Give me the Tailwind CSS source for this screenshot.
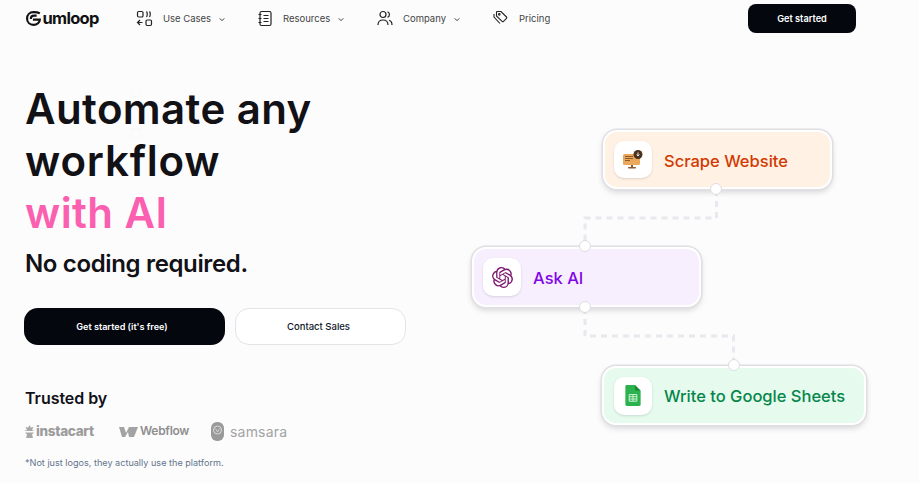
<!DOCTYPE html>
<html lang="en">
  <head>
    <meta charset="UTF-8" />
    <meta name="viewport" content="width=device-width, initial-scale=1.0" />
    <title>Gumloop</title>
    <script src="https://cdn.jsdelivr.net/npm/@tailwindcss/browser@4"></script>
  </head>
  <body class="bg-[#fcfcfd] font-['Inter',sans-serif] text-[#0f0f14] overflow-hidden">
    <div class="relative w-[919px] h-[483px] overflow-hidden">
      <!-- nav -->
      <header class="flex items-center h-[37px] pl-[26px]">
        <a class="flex items-center w-[110px] text-[16.5px] font-bold tracking-[-0.7px] text-[#111]">
          <svg class="w-[16px] h-[15px] mr-[0.5px]" viewBox="0 0 15 14" fill="none" stroke="#111" stroke-width="2"><path d="M13 2.200C11 1 9 1 7 1 3.500 1 1 3.500 1 7s2.500 6 6 6 6-2.500 6-5H6.500" /><path d="M4.500 7.500c0-2 1-3.200 3-3.200h2.500" /></svg>
          <span>umloop</span>
        </a>
        <nav class="flex items-center text-[#444] pt-[1px]">
          <a class="flex items-center w-[121px]">
            <svg class="w-[17px] h-[17px] mr-[10px] -mt-[2px]" viewBox="0 0 17 17" fill="none" stroke="#222" stroke-width="1.2"><rect x="1.500" y="1.500" width="5.500" height="5.500" rx="1.200" /><rect x="10" y="10" width="5.500" height="5.500" rx="1.200" /><path d="M10.500 1.500c1 1.200 1 4 0 5.500M13.500 1.500c1 1.200 1 4 0 5.500M1.500 12.500h5M4 10l-2.500 2.500L4 15" /></svg>
            <span class="text-[9.5px]">Use Cases</span>
            <svg class="w-[6px] h-[5px] ml-[8px]" viewBox="0 0 8 6" fill="none" stroke="#333" stroke-width="1.3"><path d="M1 1.500l3 3 3-3" /></svg>
          </a>
          <a class="flex items-center w-[120px]">
            <svg class="w-[17px] h-[17px] mr-[9px] -mt-[2px]" viewBox="0 0 17 17" fill="none" stroke="#222" stroke-width="1.2"><rect x="3" y="1.500" width="11" height="14" rx="1.500" /><path d="M6.500 5.500h5M6.500 8.500h5M6.500 11.500h5M1.500 4.500h3M1.500 8.500h3M1.500 12.500h3" /></svg>
            <span class="text-[9.5px]">Resources</span>
            <svg class="w-[6px] h-[5px] ml-[8px]" viewBox="0 0 8 6" fill="none" stroke="#333" stroke-width="1.3"><path d="M1 1.500l3 3 3-3" /></svg>
          </a>
          <a class="flex items-center w-[115px]">
            <svg class="w-[16px] h-[16px] mr-[10px] -mt-[3px]" viewBox="0 0 16 16" fill="none" stroke="#222" stroke-width="1.2"><circle cx="6" cy="4.500" r="3" /><path d="M1 15c0-3.500 2-5 5-5s5 1.500 5 5M10.500 1.700a3 3 0 0 1 0 5.600M12 10.300c2 .6 3 2 3 4.700" /></svg>
            <span class="text-[9.5px]">Company</span>
            <svg class="w-[6px] h-[5px] ml-[8px]" viewBox="0 0 8 6" fill="none" stroke="#333" stroke-width="1.3"><path d="M1 1.500l3 3 3-3" /></svg>
          </a>
          <a class="flex items-center">
            <svg class="w-[16px] h-[16px] mr-[11px] -mt-[3px]" viewBox="0 0 16 16" fill="none" stroke="#222" stroke-width="1.1"><path d="M5 1.500h4l5.500 5.500a1 1 0 0 1 0 1.400l-3 3a1 1 0 0 1-1.400 0L4.500 6V2z" /><circle cx="7.300" cy="4.300" r=".8" /><path d="M2 4v3l6 6.500" /></svg>
            <span class="text-[9.5px]">Pricing</span>
          </a>
        </nav>
        <button class="ml-auto mr-[63px] w-[108px] h-[29px] rounded-[8px] bg-[#05070f] text-white text-[9.2px] font-semibold">Get started</button>
      </header>

      <!-- faint dropdown fading out behind the headline -->
      <div class="absolute left-[131px] top-[62px] flex flex-col text-[8px] leading-[12px] text-black/[0.03]">
        <span class="flex items-center gap-[5px] h-[20px]"><i class="w-[10px] h-[10px] rounded-full border border-black/[0.015]"></i>AI Web Scraping</span>
        <span class="flex items-center gap-[5px] h-[20px]"><i class="w-[10px] h-[10px] rounded-[3px] border border-black/[0.015]"></i>Social Media</span>
        <span class="flex items-center gap-[5px] h-[20px] mt-[21px]"><i class="w-[10px] h-[10px] border border-black/[0.015]"></i>Document Processing</span>
      </div>

      <!-- hero copy -->
      <main class="relative pl-[25px] pt-[46px]">
        <h1 class="text-[42px] leading-[52px] font-semibold tracking-[0.4px] text-[#111116]">
          Automate any<br /><span class="tracking-[0.8px]">workflow</span><br /><span class="text-[#fb5fb0]">with AI</span>
        </h1>
        <p class="mt-[9px] text-[24px] leading-[32px] font-semibold tracking-[-0.35px] text-[#111116]">No coding required.</p>
        <div class="mt-[28px] -ml-[1px] flex gap-[10px]">
          <button class="w-[201px] h-[37px] pr-[5px] rounded-[14px] bg-[#05070f] text-white text-[9.1px] font-semibold">Get started (it's free)</button>
          <button class="w-[171px] h-[37px] pr-[4px] pt-[1px] rounded-[14px] border border-[#e3e4e8] bg-white text-[#0f172a] text-[9.5px] font-medium">Contact Sales</button>
        </div>
        <p class="mt-[41px] text-[16px] leading-[24px] font-semibold tracking-[-0.05px] text-[#111116]">Trusted by</p>
        <div class="mt-[9px] -ml-[1px] flex items-center h-[24px] text-[#9c9c9c]">
          <span class="flex items-center w-[95px] text-[13.5px] font-extrabold tracking-[-0.3px]">
            <svg class="w-[11px] h-[13px] mr-[1px]" viewBox="0 0 11 13" fill="#a8a8a8"><path d="M5.500 0l1.300 2.500L9.500 2 8 5l3 1H0l3-1-1.500-3 2.700.5zM1 7.500h9L8 9.500 9 13H2l1-3.500z" /></svg>
            instacart
          </span>
          <span class="flex items-center w-[92px] text-[12px] font-semibold tracking-[-0.3px] text-[#8f8f8f]">
            <svg class="w-[19px] h-[11px] mr-[2px]" viewBox="0 0 19 11" fill="#a3a3a3"><path d="M0 1h5l2 6 3-6h9l-4 10h-5l-1-5-3 5H3z" /></svg>
            Webflow
          </span>
          <span class="flex items-center text-[14px] tracking-[0.2px] text-[#a3a3a3]">
            <svg class="w-[13px] h-[19px] mr-[6px]" viewBox="0 0 13 19"><rect width="13" height="19" rx="6" fill="#9a9a9a" /><circle cx="6.500" cy="8" r="4" fill="none" stroke="#ddd" /><path d="M4.500 6.500l2 3.500 2-3.500" fill="none" stroke="#ddd" stroke-width=".8" /></svg>
            samsara
          </span>
        </div>
        <p class="mt-[14px] text-[9.1px] leading-[12px] text-[#64748b]">*Not just logos, they actually use the platform.</p>
      </main>

      <!-- workflow diagram -->
      <svg class="absolute left-0 top-0 w-[919px] h-[483px]" viewBox="0 0 919 483" fill="none">
        <path d="M716.500 190V218H585V247M585 308V336H733.500V365" stroke="#e8e8ee" stroke-width="3" stroke-dasharray="6 5" />
      </svg>

      <div class="absolute left-[603px] top-[130px] w-[229px] h-[59px] rounded-[14px] bg-[#fff1e4] border-2 border-white flex items-center pl-[9px] gap-[12px] shadow-[0_0_0_1.5px_#dfdfe4,0_3px_6px_rgba(0,0,0,0.16)]">
        <span class="w-[38px] h-[37px] rounded-[10px] bg-white flex items-center justify-center shadow-sm">
          <svg class="w-[21px] h-[20px]" viewBox="0 0 21 20"><rect x="0" y="4" width="17" height="11" rx="1.500" fill="#eba75a" /><path d="M2 6.500h8M2 8.500h8M2 10.500h5" stroke="#8a5a2b" stroke-width="1" /><rect x="8" y="15" width="2" height="2" fill="#8a5a2b" /><rect x="5" y="17" width="8" height="1.500" rx=".7" fill="#8a5a2b" /><circle cx="15" cy="4.500" r="4.500" fill="#4a3320" /><path d="M15 2.500v3M13.700 4.500l1.300 1.500 1.300-1.500" stroke="#fff" stroke-width=".9" fill="none" /></svg>
        </span>
        <span class="text-[16.5px] font-[450] pt-[3px] text-[#d13a00]">Scrape Website</span>
      </div>

      <div class="absolute left-[472px] top-[247px] w-[229px] h-[60px] rounded-[14px] bg-[#f7effe] border-2 border-white flex items-center pl-[9px] gap-[12px] shadow-[0_0_0_1.5px_#dfdfe4,0_3px_6px_rgba(0,0,0,0.16)]">
        <span class="w-[38px] h-[38px] rounded-[10px] bg-white flex items-center justify-center shadow-sm">
          <svg class="w-[21px] h-[21px]" viewBox="0 0 24 24" fill="#7d1a6e"><path d="M22.282 9.821a5.985 5.985 0 0 0-.516-4.91 6.046 6.046 0 0 0-6.51-2.9A6.065 6.065 0 0 0 4.981 4.18a5.985 5.985 0 0 0-3.998 2.9 6.046 6.046 0 0 0 .743 7.097 5.98 5.98 0 0 0 .51 4.911 6.051 6.051 0 0 0 6.515 2.9A5.985 5.985 0 0 0 13.26 24a6.056 6.056 0 0 0 5.772-4.206 5.99 5.99 0 0 0 3.997-2.9 6.056 6.056 0 0 0-.747-7.073zM13.26 22.43a4.476 4.476 0 0 1-2.876-1.04l.141-.081 4.779-2.758a.795.795 0 0 0 .392-.681v-6.737l2.02 1.168a.071.071 0 0 1 .038.052v5.583a4.504 4.504 0 0 1-4.494 4.494zM3.6 18.304a4.47 4.47 0 0 1-.535-3.014l.142.085 4.783 2.759a.771.771 0 0 0 .78 0l5.843-3.369v2.332a.08.08 0 0 1-.033.062L9.74 19.95a4.5 4.5 0 0 1-6.14-1.646zM2.34 7.896a4.485 4.485 0 0 1 2.366-1.973V11.6a.766.766 0 0 0 .388.676l5.815 3.355-2.02 1.168a.076.076 0 0 1-.071 0l-4.83-2.786A4.504 4.504 0 0 1 2.34 7.872zm16.597 3.855-5.833-3.387L15.119 7.2a.076.076 0 0 1 .071 0l4.83 2.791a4.494 4.494 0 0 1-.676 8.105v-5.678a.79.79 0 0 0-.407-.667zm2.01-3.023-.141-.085-4.774-2.782a.776.776 0 0 0-.785 0L9.409 9.23V6.897a.066.066 0 0 1 .028-.061l4.83-2.787a4.5 4.5 0 0 1 6.68 4.66zm-12.64 4.135-2.02-1.164a.08.08 0 0 1-.038-.057V6.075a4.5 4.5 0 0 1 7.375-3.453l-.142.08-4.778 2.758a.795.795 0 0 0-.393.681zm1.097-2.365 2.602-1.5 2.607 1.5v2.999l-2.597 1.5-2.607-1.5z" /></svg>
        </span>
        <span class="text-[16.5px] font-[450] pt-[2px] text-[#8207e6]">Ask AI</span>
      </div>

      <div class="absolute left-[602px] top-[366px] w-[264px] h-[59px] rounded-[14px] bg-[#e6faee] border-2 border-white flex items-center pl-[10px] gap-[12px] shadow-[0_0_0_1.5px_#dfdfe4,0_3px_6px_rgba(0,0,0,0.16)]">
        <span class="w-[38px] h-[38px] rounded-[10px] bg-white flex items-center justify-center shadow-sm">
          <svg class="w-[16px] h-[21px]" viewBox="0 0 16 22"><path d="M1.500 0H10l6 6v14.500a1.500 1.500 0 0 1-1.500 1.500h-13A1.500 1.500 0 0 1 0 20.500v-19A1.500 1.500 0 0 1 1.500 0z" fill="#2bb24c" /><path d="M10 0l6 6h-4.500A1.500 1.500 0 0 1 10 4.500z" fill="#1b8a38" /><path d="M4 10h8v7H4zM4 12.300h8M4 14.700h8M8 10v7" stroke="#d6f3dd" stroke-width="1" fill="none" /></svg>
        </span>
        <span class="text-[16.5px] font-[450] pt-[2px] text-[#04864a]">Write to Google Sheets</span>
      </div>

      <!-- connector handles -->
      <span class="absolute left-[710px] top-[183px] w-[12px] h-[12px] rounded-full bg-white border border-[#dcdce2]"></span>
      <span class="absolute left-[579px] top-[240px] w-[12px] h-[12px] rounded-full bg-white border border-[#dcdce2]"></span>
      <span class="absolute left-[579px] top-[301px] w-[12px] h-[12px] rounded-full bg-white border border-[#dcdce2]"></span>
      <span class="absolute left-[728px] top-[359px] w-[12px] h-[12px] rounded-full bg-white border border-[#dcdce2]"></span>
    </div>
  </body>
</html>
